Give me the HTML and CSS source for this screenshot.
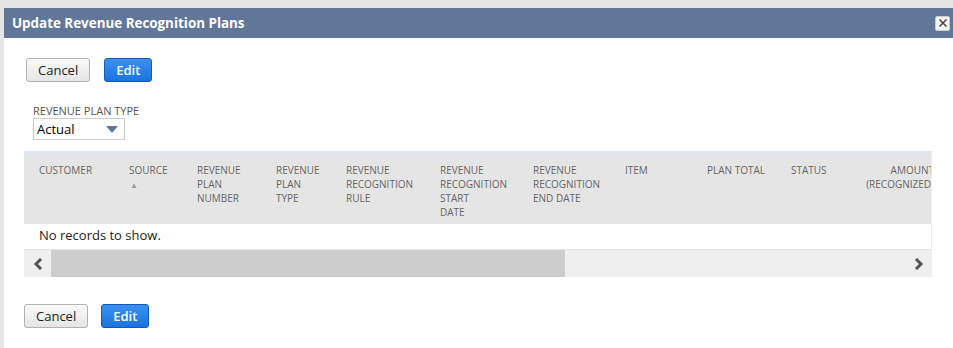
FILE: index.html
```html
<!DOCTYPE html>
<html lang="en">
<head>
    <meta charset="UTF-8">
    <title>Update Revenue Recognition Plans</title>
    <link rel="stylesheet" href="styles.css">
</head>
<body>
    <div class="dialog">
        <div class="dlg-head">
            <span class="dlg-title">Update Revenue Recognition Plans</span>
            <span class="dlg-close">
                <svg width="10" height="10" viewBox="0 0 10 10"><path d="M1.5 1.5 L8.5 8.5 M8.5 1.5 L1.5 8.5" stroke="#444" stroke-width="1.5" /></svg>
            </span>
        </div>

        <div class="dlg-body">
            <div class="btns top">
                <button class="btn">Cancel</button>
                <button class="btn primary">Edit</button>
            </div>

            <div class="field">
                <label class="field-label">REVENUE PLAN TYPE</label>
                <div class="select">
                    <span>Actual</span>
                    <svg width="12" height="7" viewBox="0 0 12 7"><path d="M0 0 H12 L6 7 Z" fill="#607799" /></svg>
                </div>
            </div>

            <div class="grid">
                <div class="grid-wrap">
                    <table class="list">
                        <colgroup>
                            <col style="width:90px">
                            <col style="width:68px">
                            <col style="width:79px">
                            <col style="width:70px">
                            <col style="width:94px">
                            <col style="width:93px">
                            <col style="width:92px">
                            <col style="width:82px">
                            <col style="width:84px">
                            <col style="width:60px">
                            <col style="width:98px">
                            <col style="width:400px">
                        </colgroup>
                        <thead>
                            <tr>
                                <th>CUSTOMER</th>
                                <th>SOURCE<br><span class="sort">&#9650;</span></th>
                                <th>REVENUE PLAN NUMBER</th>
                                <th>REVENUE PLAN TYPE</th>
                                <th>REVENUE RECOGNITION RULE</th>
                                <th>REVENUE RECOGNITION START<br>DATE</th>
                                <th>REVENUE RECOGNITION END DATE</th>
                                <th>ITEM</th>
                                <th>PLAN TOTAL</th>
                                <th>STATUS</th>
                                <th class="num">AMOUNT (RECOGNIZED)</th>
                                <th></th>
                            </tr>
                        </thead>
                        <tbody>
                            <tr>
                                <td colspan="12">No records to show.</td>
                            </tr>
                        </tbody>
                    </table>
                </div>
                <div class="hscroll">
                    <span class="arrow">
                        <svg width="10" height="12" viewBox="0 0 10 12"><path d="M8 1 L3 6 L8 11" fill="none" stroke="#555" stroke-width="3" /></svg>
                    </span>
                    <span class="thumb"></span>
                    <span class="track"></span>
                    <span class="arrow">
                        <svg width="10" height="12" viewBox="0 0 10 12"><path d="M2 1 L7 6 L2 11" fill="none" stroke="#555" stroke-width="3" /></svg>
                    </span>
                </div>
            </div>

            <div class="btns bottom">
                <button class="btn">Cancel</button>
                <button class="btn primary">Edit</button>
            </div>
        </div>
    </div>
</body>
</html>
```

FILE: styles.css
```css
body {
    margin: 0;
    padding: 8px 0 0 4px;
    background: #e5e5e5;
    font-family: "Open Sans", "Liberation Sans", sans-serif;
    color: #222;
    overflow: hidden;
}

.dialog {
    background: #fff;
    height: 340px;
}

.dlg-head {
    height: 30px;
    background: #607799;
    display: flex;
    align-items: center;
    justify-content: space-between;
    padding: 0 3px 0 8px;
}

.dlg-title {
    color: #fff;
    font-weight: bold;
    font-size: 13.4px;
}

.dlg-close {
    width: 13px;
    height: 13px;
    background: #f4f4f4;
    border: 1px solid #ccc;
    border-radius: 2px;
    display: flex;
    align-items: center;
    justify-content: center;
}

.dlg-body {
    padding: 20px 21px 0 20px;
}

.btns {
    display: flex;
    gap: 13px;
}

.btns.top {
    padding-left: 2px;
    gap: 14px;
}

.btns.bottom {
    margin-top: 27px;
}

.btn {
    height: 24px;
    padding: 0 11px;
    font-family: inherit;
    font-size: 13px;
    color: #222;
    border: 1px solid #b2b2b2;
    border-radius: 3px;
    background: linear-gradient(#fafafa, #e5e5e5);
}

.btn.primary {
    color: #fff;
    border-color: #125ab2;
    background: linear-gradient(#3c90f0, #1a73e0);
    padding: 0 11px;
    font-weight: 600;
}

.field {
    margin-top: 22px;
    padding-left: 9px;
}

.field-label {
    display: block;
    font-size: 11px;
    color: #555;
    line-height: 14px;
}

.select {
    height: 20px;
    border: 1px solid #ccc;
    display: flex;
    align-items: center;
    justify-content: space-between;
    padding: 0 6px 0 3px;
    width: 81px;
    font-size: 13px;
    color: #000;
}

.grid {
    margin-top: 11px;
    width: 908px;
}

.grid-wrap {
    overflow: hidden;
    border-top: 5px solid #e0e5ee;
    border-right: 1px solid #eee;
}

.list {
    border-collapse: collapse;
    table-layout: fixed;
    width: 1310px;
}

.list th {
    background: #e5e5e5;
    color: #666;
    font-size: 10px;
    font-weight: normal;
    line-height: 14px;
    text-align: left;
    vertical-align: top;
    padding: 7px 8px 5px 15px;
}

.list th.num {
    text-align: right;
    padding-right: 0;
}

.sort {
    font-size: 8px;
    color: #999;
    padding-left: 1px;
}

.list td {
    font-size: 13px;
    line-height: 16px;
    color: #222;
    padding: 3px 15px 6px;
    border-bottom: 1px solid #e5e5e5;
}

.hscroll {
    display: flex;
    height: 27px;
    background: #efefef;
}

.arrow {
    width: 27px;
    display: flex;
    align-items: center;
    justify-content: center;
}

.thumb {
    width: 514px;
    background: #cdcdcd;
}

.track {
    flex: 1;
}
```
